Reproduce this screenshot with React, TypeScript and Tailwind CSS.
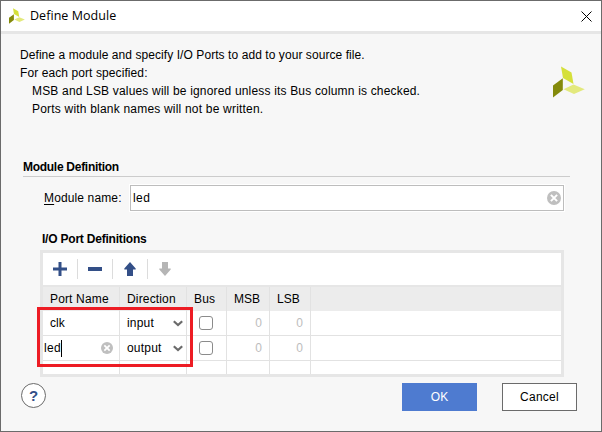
import React from "react";

function Logo({ className }: { className: string }) {
  return (
    <svg className={className} viewBox="0 0 32 32" aria-hidden="true">
      <path d="M8 0.5 18.5 6.5 20.5 18 10 12Z" fill="#d5e03a" />
      <path d="M0 19.5 9.8 12.3V24L0 31.5Z" fill="#848a0b" />
      <path d="M10.5 23.2 20.5 18.5 31.8 23.2 21 28Z" fill="#e3e97d" />
    </svg>
  );
}

function Clear({ className }: { className: string }) {
  return (
    <svg className={className} viewBox="0 0 14 14" aria-hidden="true">
      <circle cx="7" cy="7" r="7" fill="#bfbfbf" />
      <path d="M3.9 3.9 10.1 10.1M10.1 3.9 3.9 10.1" stroke="#fff" strokeWidth="2" />
    </svg>
  );
}

function Arrow({ className }: { className: string }) {
  return (
    <svg className={className} viewBox="0 0 12 14" aria-hidden="true">
      <path d="M6 0 11.7 6.5V7.5H9V14H3V7.5H0.3V6.5Z" fill="currentColor" />
    </svg>
  );
}

function Chevron() {
  return (
    <svg className="h-[7px] w-[10px]" viewBox="0 0 10 7" aria-hidden="true">
      <path d="M0.8 1.2 5 5 9.2 1.2" fill="none" stroke="#6b6b6b" strokeWidth="2.2" />
    </svg>
  );
}

function Tool({ children, last = false }: { children: React.ReactNode; last?: boolean }) {
  return (
    <div className={last ? "flex h-5 w-[35px] items-center justify-center" : "flex h-5 w-[35px] items-center justify-center border-r border-[#dcdcdc]"}>
      {children}
    </div>
  );
}

const columns = "grid grid-cols-[77px_67px_40px_43px_41px_1fr]";
const cell = "flex items-center border-r border-[#e2e2e2]";

function Row({ name, direction }: { name: React.ReactNode; direction: string }) {
  return (
    <div className={columns + " h-[25px] border-b border-[#e2e2e2]"}>
      <div className={cell}>{name}</div>
      <div className={cell + " justify-between pl-[7px] pr-[3px]"}>
        <span className="tracking-[0.2px]">{direction}</span>
        <Chevron />
      </div>
      <div className={cell + " pl-3"}>
        <span className="size-[14px] rounded-[3px] border border-[#8b8b8b] bg-white" />
      </div>
      <div className={cell + " justify-end pr-[7px] text-[#bdbdbd]"}>0</div>
      <div className={cell + " justify-end pr-[7px] text-[#bdbdbd]"}>0</div>
    </div>
  );
}

export default function App() {
  return (
    <div className="flex h-[432px] w-[602px] flex-col border border-[#6b6b6b] bg-[#f7f7f7] font-['Liberation_Sans',Arial,sans-serif] text-[12px] leading-[18px] text-black">
      <header className="flex h-[33px] shrink-0 items-center justify-between border-b-[3px] border-[#e6e6e6] bg-white pl-2 pr-[9px]">
        <div className="flex items-center gap-[5px]">
          <Logo className="size-4" />
          <h1 className="font-['Open_Sans',sans-serif] text-[12.5px] tracking-[0.05px]">Define Module</h1>
        </div>
        <svg className="size-[11px]" viewBox="0 0 11 11" aria-label="Close">
          <path d="M0.5 0.5 10.5 10.5M10.5 0.5 0.5 10.5" stroke="#000" />
        </svg>
      </header>

      <div className="flex h-[124px] shrink-0 justify-between pl-[19px] pr-[16px] pt-3">
        <div className="whitespace-nowrap">
          <p className="tracking-[0.07px]">Define a module and specify I/O Ports to add to your source file.</p>
          <p className="tracking-[0.09px]">For each port specified:</p>
          <p className="pl-3 tracking-[0.175px]">MSB and LSB values will be ignored unless its Bus column is checked.</p>
          <p className="pl-3 tracking-[0.2px]">Ports with blank names will not be written.</p>
        </div>
        <Logo className="mt-5 size-8" />
      </div>

      <h2 className="ml-[22px] mr-[31px] h-[19px] shrink-0 border-b border-[#cccccc] font-bold tracking-[-0.28px]">Module Definition</h2>

      <div className="ml-[43px] mt-[7px] flex h-7 shrink-0 items-center">
        <label className="w-[85px] tracking-[0.13px]"><span className="underline underline-offset-2">M</span>odule name:</label>
        <div className="border border-white">
          <div className="flex h-[26px] w-[434px] items-center justify-between border border-[#bdbdbd] bg-white pl-[2px] pr-[2px]">
            <span className="tracking-[0.4px]">led</span>
            <Clear className="size-[14px]" />
          </div>
        </div>
      </div>

      <h2 className="ml-[41px] mt-[18px] h-5 shrink-0 font-bold tracking-[-0.21px]">I/O Port Definitions</h2>

      <section className="relative ml-[39px] h-[127px] w-[524px] shrink-0 border-[3px] border-[#e6e6e6] bg-white">
        <div className="flex h-8 items-center">
          <Tool>
            <svg className="size-[14px] text-[#334f87]" viewBox="0 0 14 14"><path d="M7 0V14M0 7H14" stroke="currentColor" strokeWidth="3" /></svg>
          </Tool>
          <Tool>
            <span className="h-1 w-[14px] bg-[#334f87]" />
          </Tool>
          <Tool><Arrow className="h-[14px] w-3 text-[#334f87]" /></Tool>
          <Tool last><Arrow className="mr-px h-[14px] w-3 rotate-180 text-[#b5b5b5]" /></Tool>
        </div>
        <div className={columns + " h-[26px] border-t-2 border-[#e6e6e6] bg-[#ececec]"}>
          <div className={cell + " border-[#dadada] pl-[7px] tracking-[0.15px]"}>Port Name</div>
          <div className={cell + " border-[#dadada] pl-[7px] tracking-[0.16px]"}>Direction</div>
          <div className={cell + " border-[#dadada] pl-[7px] tracking-[0.2px]"}>Bus</div>
          <div className={cell + " border-[#dadada] pl-[7px]"}>MSB</div>
          <div className={cell + " border-[#dadada] pl-[7px]"}>LSB</div>
        </div>
        <Row name={<span className="pl-[7px] tracking-[0.1px]">clk</span>} direction="input" />
        <Row
          name={
            <div className="flex w-full items-center justify-between pl-px pr-[6px]">
              <span className="border-r border-black leading-[17px] tracking-[0.35px]">led</span>
              <Clear className="size-3" />
            </div>
          }
          direction="output"
        />
        <div className={columns + " h-[13px]"}>
          <div className={cell} />
          <div className={cell} />
          <div className={cell} />
          <div className={cell} />
          <div className={cell} />
        </div>
        <div className="pointer-events-none absolute -left-[6px] top-[54px] h-[60px] w-[156px] border-[3px] border-[#ed1c24]" />
      </section>

      <footer className="mt-[6px] flex h-7 shrink-0 items-start justify-between pl-5 pr-6">
        <button className="flex size-[25px] items-center justify-center rounded-full border border-[#6b6b6b] bg-white text-[15px] font-bold text-[#334f87]">?</button>
        <div className="flex gap-[25px]">
          <button className="h-7 w-[75px] bg-[#4e7bd0] text-white">OK</button>
          <button className="h-7 w-[75px] border border-[#6b6b6b] bg-white tracking-[0.25px]">Cancel</button>
        </div>
      </footer>
    </div>
  );
}
